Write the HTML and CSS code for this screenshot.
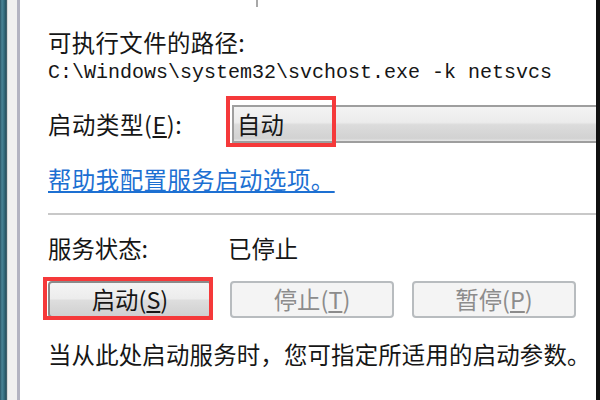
FILE: index.html
```html
<!DOCTYPE html>
<html lang="zh-CN">
<head>
<meta charset="utf-8">
<title>服务属性</title>
<link rel="stylesheet" href="styles.css">
</head>
<body>
<div class="screen">
  <div class="edge">
    <div class="edge-teal"></div>
    <div class="edge-rail"></div>
    <div class="edge-line"></div>
  </div>
  <div class="main">
    <div class="tick-row"><div class="tick"></div></div>
    <div class="text-line first">可执行文件的路径:</div>
    <div class="path">C:\Windows\system32\svchost.exe -k netsvcs</div>
    <div class="type-row">
      <div class="field-label">启动类型(<u>E</u>):</div>
      <div class="combo">
        <span class="combo-text">自动</span>
        <div class="mark mark-combo"></div>
      </div>
    </div>
    <a class="link" href="#">帮助我配置服务启动选项。</a>
    <div class="separator"></div>
    <div class="status-row">
      <div class="field-label">服务状态:</div>
      <div class="status-value">已停止</div>
    </div>
    <div class="button-row">
      <div class="btn-wrap">
        <button class="btn">启动(<u>S</u>)</button>
        <div class="mark mark-btn"></div>
      </div>
      <button class="btn" disabled>停止(<u>T</u>)</button>
      <button class="btn" disabled>暂停(<u>P</u>)</button>
    </div>
    <div class="text-line hint">当从此处启动服务时，您可指定所适用的启动参数。</div>
  </div>
  <div class="edge-right"></div>
</div>
</body>
</html>
```

FILE: styles.css
```css
* { box-sizing: border-box; }
html, body { margin: 0; padding: 0; background: #ffffff; }
body {
  font-family: "Noto Sans CJK SC", "Noto Sans", sans-serif;
  color: #161616;
}
.screen {
  width: 600px;
  height: 400px;
  display: flex;
  overflow: hidden;
  background: #ffffff;
}
.edge { display: flex; flex: 0 0 20px; }
.edge-teal {
  width: 7px;
  background: linear-gradient(90deg, #2c5566 0, #4a8496 2px, #366e80 4px, #27505e 6px, #5a6f78 7px);
}
.edge-rail { width: 10px; background: #f0f0f0; border-left: 1px solid #d8d8d8; }
.edge-line { width: 3px; background: #b3b4c2; }
.edge-right { flex: 0 0 4px; background: #111111; }

.main {
  flex: 1;
  min-width: 0;
  padding-left: 28px;
  display: flex;
  flex-direction: column;
}
.tick-row { height: 7px; }
.tick { width: 2px; height: 7px; margin-left: 208px; background: #a8a8a8; }

.text-line, .field-label, .status-value, .link, .combo-text {
  font-size: 23.4px;
  line-height: 25px;
  white-space: nowrap;
}
.first { margin-top: 23px; letter-spacing: 0.4px; }
.path {
  margin-top: 7px;
  font-family: "Liberation Mono", monospace;
  font-size: 20px;
  line-height: 22px;
  white-space: nowrap;
  color: #161616;
}
.type-row {
  margin-top: 21px;
  height: 38px;
  display: flex;
  align-items: center;
}
.type-row .field-label { width: 184px; letter-spacing: 0.6px; }
.combo {
  position: relative;
  flex: 1;
  height: 38px;
  display: flex;
  align-items: center;
  padding-left: 3px;
  border: 2px solid #9e9e9e;
  border-right: none;
  background: linear-gradient(#f3f3f3 0%, #ececec 45%, #dcdcdc 52%, #d2d2d2 92%, #e6e6e6 100%);
}
.mark {
  position: absolute;
  border: 4px solid #f5393a;
  pointer-events: none;
}
.mark-combo { left: -8px; top: -11px; width: 110px; height: 51px; }

.link {
  margin-top: 24px;
  align-self: flex-start;
  color: #1d70d2;
  letter-spacing: 0.5px;
  text-decoration: underline;
  text-underline-offset: 2px;
}
.separator {
  margin-top: 21px;
  height: 2px;
  background: #c8c8c8;
}
.status-row {
  margin-top: 21px;
  display: flex;
}
.status-row .field-label { width: 180px; }

.button-row {
  margin-top: 20px;
  display: flex;
  gap: 18px;
}
.btn-wrap { position: relative; }
.btn {
  width: 164px;
  height: 37px;
  padding: 0;
  font-family: "Noto Sans CJK SC", "Noto Sans", sans-serif;
  font-size: 23.4px;
  line-height: 25px;
  color: #161616;
  border: 2px solid #8a8a8a;
  border-radius: 4px;
  background: linear-gradient(#f4f4f4 0%, #ececec 48%, #dedede 52%, #d0d0d0 100%);
}
.btn:disabled {
  color: #8c8c8c;
  border-color: #b8bcbf;
  background: #f4f4f4;
}
.mark-btn { left: -5px; top: -4px; width: 170px; height: 43px; }
.hint { margin-top: 24px; letter-spacing: 0.2px; }
```
